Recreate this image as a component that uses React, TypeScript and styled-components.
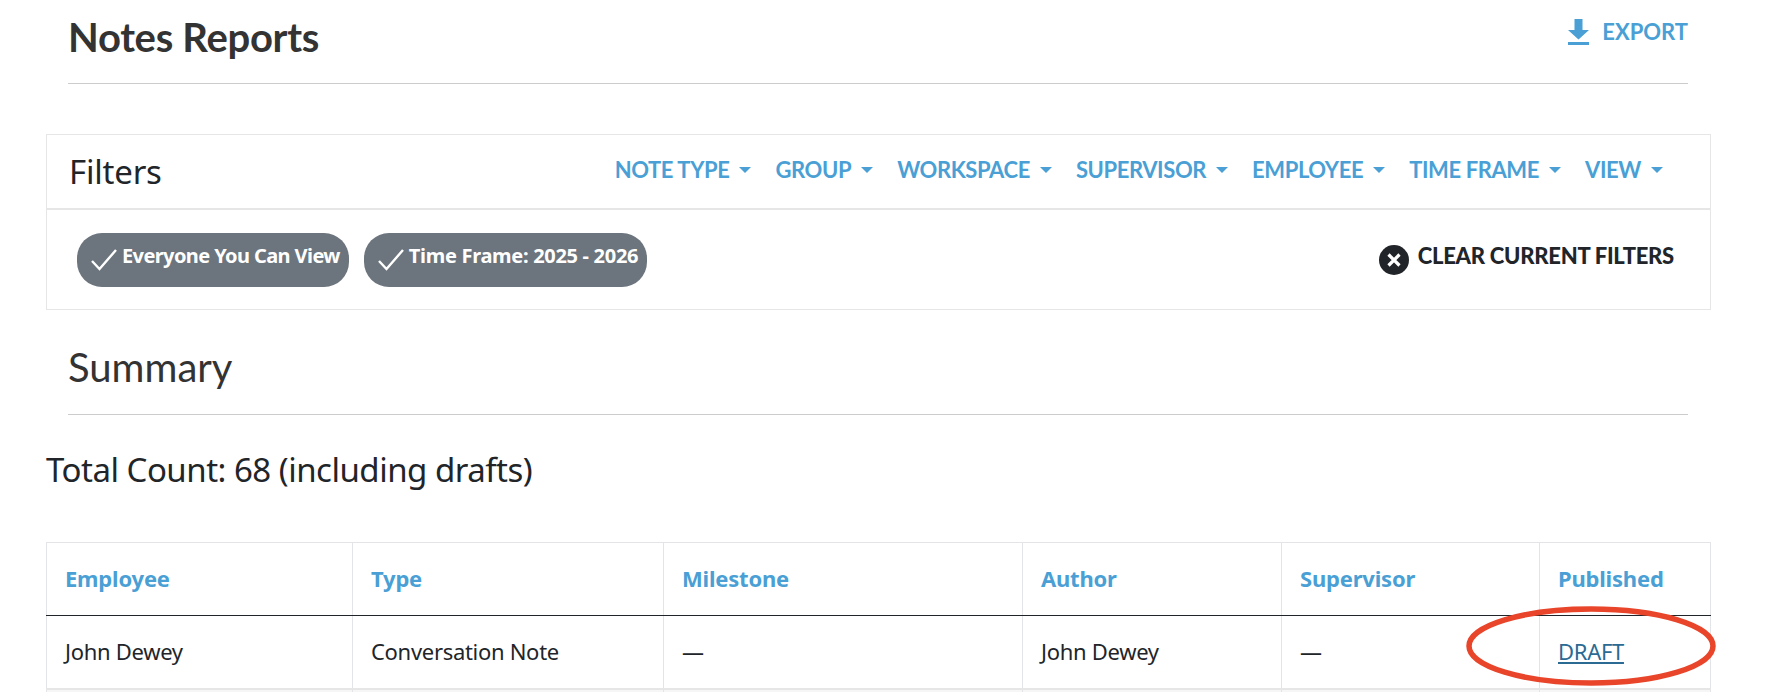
import React from "react";
import styled, { createGlobalStyle } from "styled-components";

const Global = createGlobalStyle`
  html, body { margin: 0; padding: 0; background: #fff; height: 692px; overflow: hidden; }
  * { box-sizing: border-box; }
`;

const HEAD = `"Lato", "Liberation Sans", sans-serif`;
const BODY = `"Noto Sans", "Liberation Sans", sans-serif`;
const BLUE = "#4a9fd5";

const Page = styled.div`
  width: 1778px;
  padding: 0 67px 0 46px;
  font-family: ${BODY};
  color: #212529;
`;

const TitleBar = styled.header`
  margin: 0 23px 0 22px;
  height: 84px;
  padding-top: 12px;
  border-bottom: 1px solid #ccc;
  display: flex;
  justify-content: space-between;
  align-items: flex-start;
`;

const Title = styled.h1`
  margin: 0;
  font: 700 40px/50px ${HEAD};
  letter-spacing: -0.3px;
  color: #333;
`;

const ExportLink = styled.a`
  display: flex;
  align-items: center;
  gap: 13px;
  color: ${BLUE};
  font: 700 22px/26px ${HEAD};
  margin-top: 7px;
`;

const Panel = styled.section`
  margin-top: 50px;
  border: 1px solid #e6e6e6;
  height: 176px;
`;

const PanelHead = styled.div`
  height: 75px;
  border-bottom: 2px solid #e6e6e6;
  display: flex;
  align-items: center;
  justify-content: space-between;
  padding: 0 47px 0 22px;
`;

const PanelTitle = styled.h2`
  margin: 0;
  font: 400 33px/44px ${BODY};
  letter-spacing: -0.2px;
`;

const Menu = styled.nav`
  display: flex;
  gap: 24px;
  margin-top: -3px;
`;

const MenuItem = styled.a`
  display: flex;
  align-items: center;
  gap: 10px;
  color: ${BLUE};
  font: 700 22px/26px ${HEAD};
  letter-spacing: -0.4px;
`;

const Caret = styled.span`
  width: 0;
  height: 0;
  border-left: 6px solid transparent;
  border-right: 6px solid transparent;
  border-top: 6px solid ${BLUE};
`;

const PanelBody = styled.div`
  display: flex;
  align-items: center;
  justify-content: space-between;
  padding: 23px 36px 0 30px;
`;

const Pills = styled.div`
  display: flex;
  gap: 15px;
`;

const Pill = styled.span<{ $tracking: number }>`
  display: flex;
  align-items: center;
  gap: 5px;
  height: 54px;
  padding: 0 9px 0 14px;
  border-radius: 25px;
  background: #6c757d;
  color: #fff;
  font: 700 20px/26px ${BODY};
  letter-spacing: ${(p) => p.$tracking}px;
`;

const RaisedLabel = styled.span`
  margin-top: -9px;
`;

const Clear = styled.a`
  display: flex;
  align-items: center;
  gap: 9px;
  color: #212529;
  font: 900 22px/26px ${HEAD};
  letter-spacing: -0.25px;
`;

const SectionTitle = styled.h2`
  margin: 0 23px 0 22px;
  height: 105px;
  padding-top: 32px;
  border-bottom: 1px solid #ccc;
  font: 400 40px/50px ${HEAD};
  color: #333;
`;

const Count = styled.p`
  margin: 33px 0 0;
  font: 400 33px/44px ${BODY};
  letter-spacing: -0.5px;
`;

const TableWrap = styled.div`
  position: relative;
  margin-top: 50px;
`;

const Table = styled.table`
  width: 1664px;
  table-layout: fixed;
  border-collapse: collapse;
`;

const Th = styled.th`
  height: 73px;
  padding: 0 18px 3px;
  text-align: left;
  border: 1px solid #e2e4e8;
  border-bottom: 1px solid #212529;
  color: ${BLUE};
  font: 700 22px/28px ${BODY};
  letter-spacing: -0.2px;
`;

const Td = styled.td`
  height: 73px;
  padding: 0 18px 2px;
  border: 1px solid #e2e4e8;
  border-top: 0;
  border-bottom: 2px solid #e6e6e6;
  font: 400 22px/28px ${BODY};
  letter-spacing: -0.3px;
`;

const NextTd = styled.td`
  height: 20px;
  background: #f6f6f6;
  border: 1px solid #e2e4e8;
  border-top: 0;
`;

const DraftLink = styled.a`
  color: #2a6a93;
  text-decoration: underline;
`;

const Annotation = styled.svg`
  position: absolute;
  left: 1418px;
  top: 63px;
  pointer-events: none;
`;

const filters = ["NOTE TYPE", "GROUP", "WORKSPACE", "SUPERVISOR", "EMPLOYEE", "TIME FRAME", "VIEW"];
const columns = [
  { name: "Employee", width: 306 },
  { name: "Type", width: 311 },
  { name: "Milestone", width: 359 },
  { name: "Author", width: 259 },
  { name: "Supervisor", width: 258 },
  { name: "Published", width: 171 },
];

const Check = () => (
  <svg width="26" height="22" viewBox="0 0 26 22" fill="none">
    <path d="M1 12 L8.5 20 L25 1" stroke="#fff" strokeWidth="2.400" />
  </svg>
);

export default function App() {
  return (
    <Page>
      <Global />
      <TitleBar>
        <Title>Notes Reports</Title>
        <ExportLink>
          <svg width="21" height="26" viewBox="0 0 21 26">
            <path d="M6.500 0h8v11H21L10.500 20.500 0 11h6.500z M0 23h21v3H0z" fill={BLUE} />
          </svg>
          EXPORT
        </ExportLink>
      </TitleBar>
      <Panel>
        <PanelHead>
          <PanelTitle>Filters</PanelTitle>
          <Menu>
            {filters.map((f) => (
              <MenuItem key={f}>
                {f}
                <Caret />
              </MenuItem>
            ))}
          </Menu>
        </PanelHead>
        <PanelBody>
          <Pills>
            <Pill $tracking={-0.6}><Check /><RaisedLabel>Everyone You Can View</RaisedLabel></Pill>
            <Pill $tracking={-0.3}><Check /><RaisedLabel>Time Frame: 2025 - 2026</RaisedLabel></Pill>
          </Pills>
          <Clear>
            <svg width="30" height="30" viewBox="0 0 30 30">
              <circle cx="15" cy="15" r="15" fill="#212529" />
              <path d="M9.500 9.500 L20.500 20.500 M20.500 9.500 L9.500 20.500" stroke="#fff" strokeWidth="3.200" />
            </svg>
            <RaisedLabel>CLEAR CURRENT FILTERS</RaisedLabel>
          </Clear>
        </PanelBody>
      </Panel>
      <SectionTitle>Summary</SectionTitle>
      <Count>Total Count: 68 (including drafts)</Count>
      <TableWrap>
        <Table>
          <colgroup>
            {columns.map((c) => (
              <col key={c.name} width={c.width} />
            ))}
          </colgroup>
          <thead>
            <tr>
              {columns.map((c) => (
                <Th key={c.name}>{c.name}</Th>
              ))}
            </tr>
          </thead>
          <tbody>
            <tr>
              <Td>John Dewey</Td>
              <Td>Conversation Note</Td>
              <Td>—</Td>
              <Td>John Dewey</Td>
              <Td>—</Td>
              <Td><DraftLink>DRAFT</DraftLink></Td>
            </tr>
            <tr>
              {columns.map((c) => (
                <NextTd key={c.name} />
              ))}
            </tr>
          </tbody>
        </Table>
        <Annotation width="254" height="82" viewBox="0 0 254 82" fill="none">
          <ellipse cx="127" cy="41" rx="122" ry="37" stroke="#e8452a" strokeWidth="5.500" />
        </Annotation>
      </TableWrap>
    </Page>
  );
}
